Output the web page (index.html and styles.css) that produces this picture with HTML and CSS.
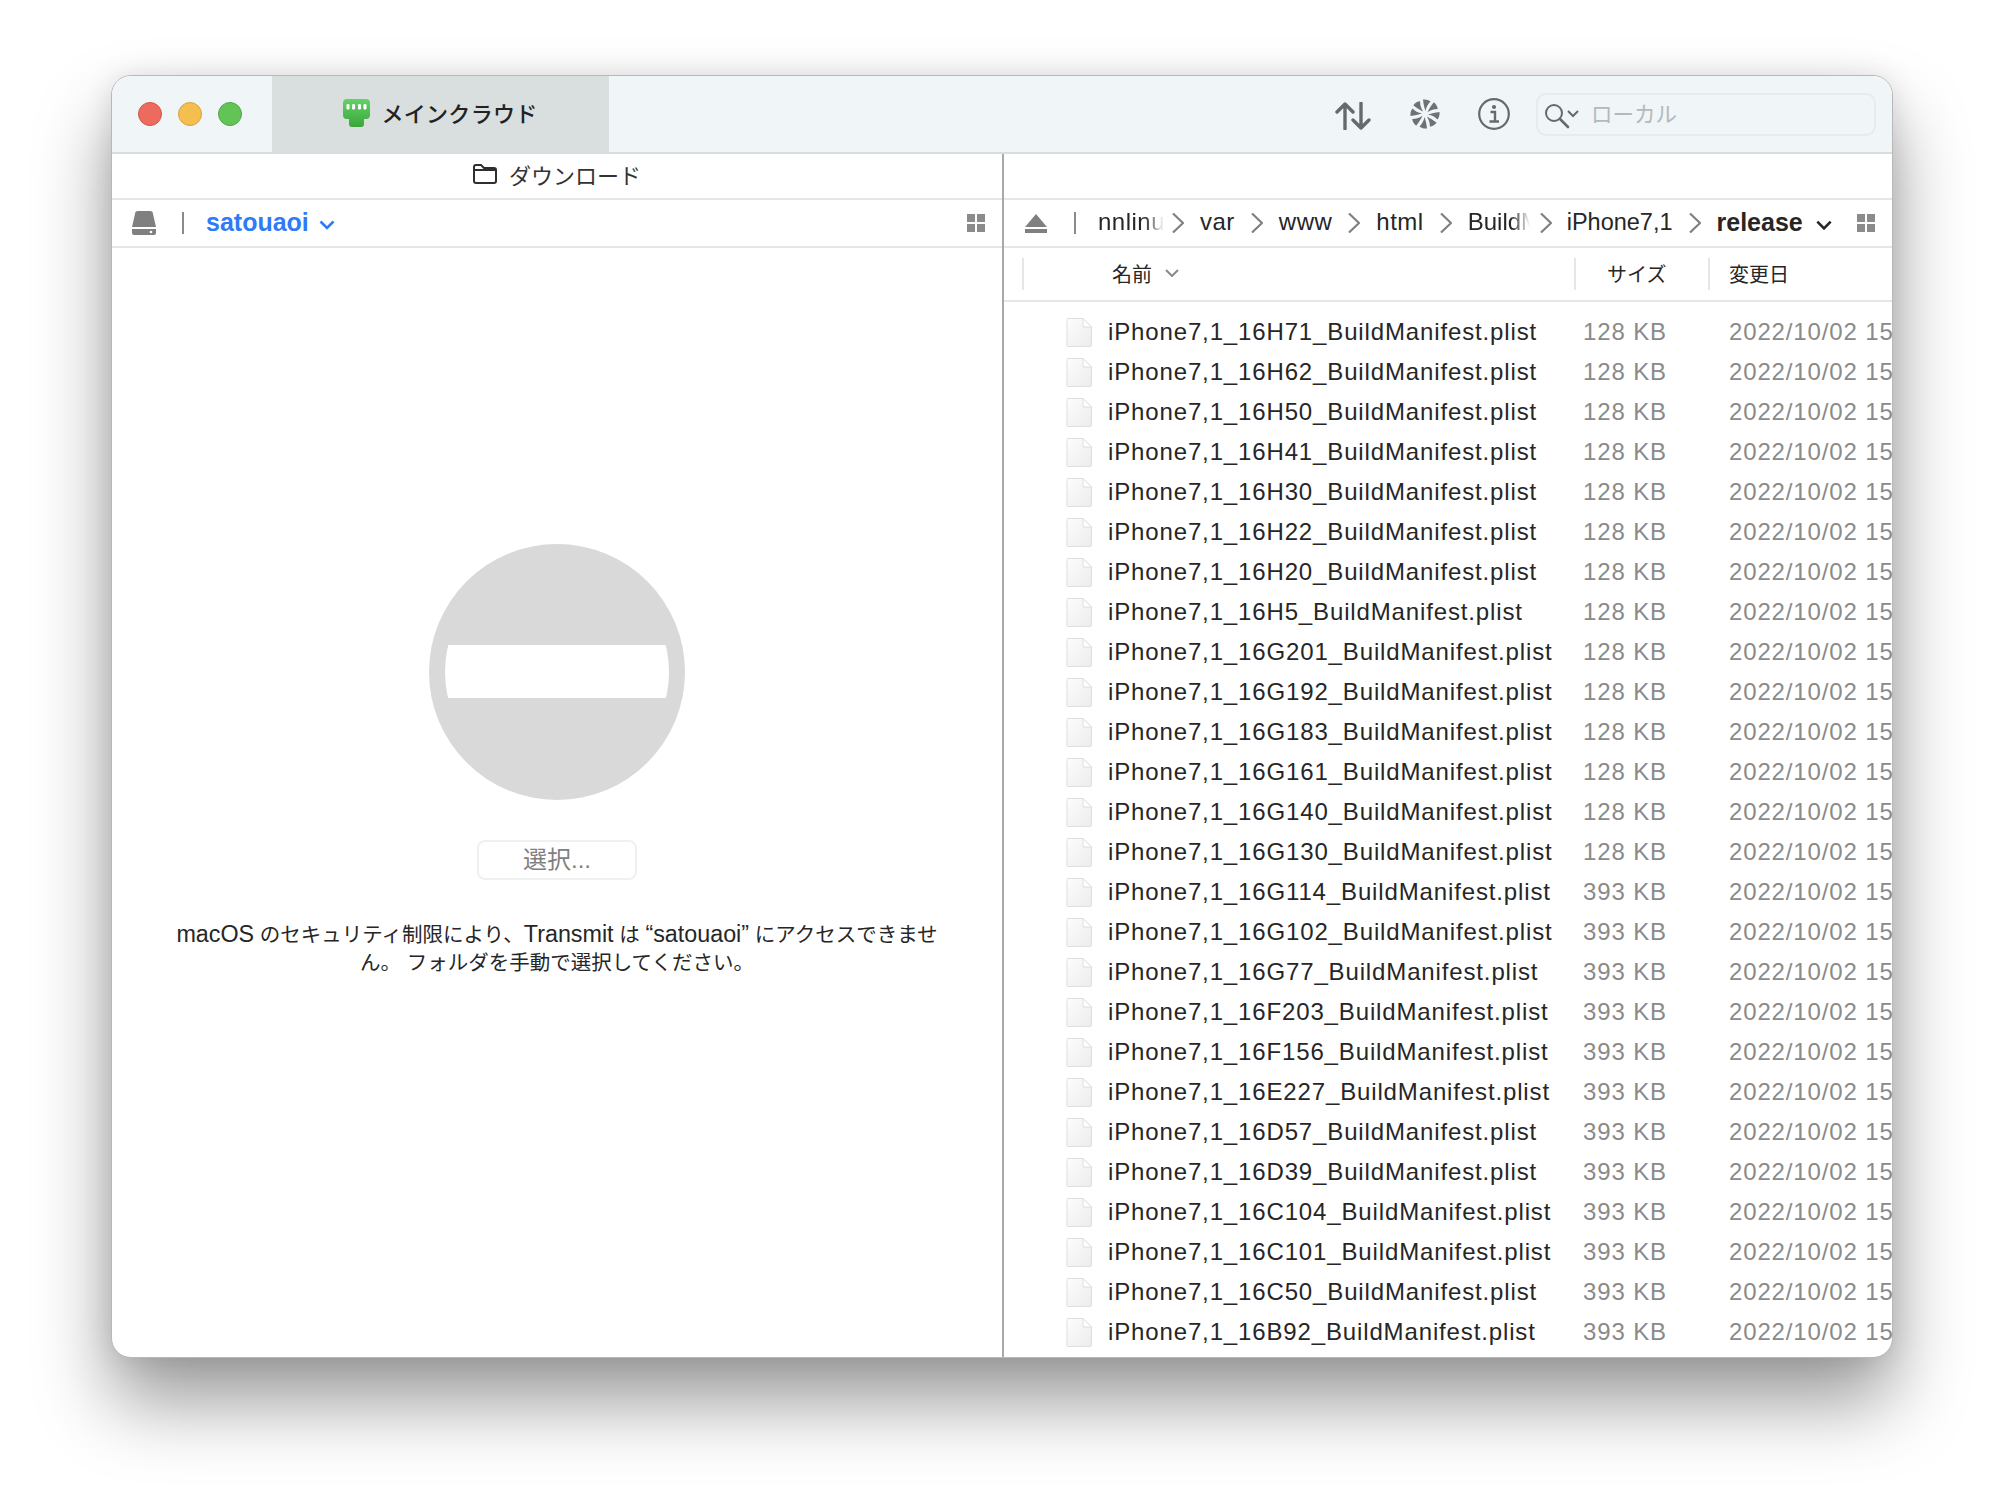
FILE: index.html
```html
<!DOCTYPE html>
<html lang="ja">
<head>
    <meta charset="UTF-8">
    <title>Transmit</title>
    <link rel="stylesheet" href="styles.css">
</head>
<body>
    <svg class="sprites" width="0" height="0">
        <defs>
            <linearGradient id="doc-fill" x1="0" y1="0" x2="1" y2="1">
                <stop offset="0" stop-color="#fdfdfd"/>
                <stop offset="1" stop-color="#ececec"/>
            </linearGradient>
            <linearGradient id="plug-fill" x1="0" y1="0" x2="0" y2="1">
                <stop offset="0" stop-color="#62d365"/>
                <stop offset="1" stop-color="#3aa63a"/>
            </linearGradient>
            <symbol id="doc" viewBox="0 0 26 29">
                <path d="M1 1.500a1 1 0 0 1 1-1H17l8.500 8.500V27a1.500 1.500 0 0 1-1.500 1.500H2a1 1 0 0 1-1-1z" fill="url(#doc-fill)" stroke="#dedede"/>
                <path d="M17 .5V9h8.500z" fill="#fff" stroke="#dedede"/>
            </symbol>
            <symbol id="grid" viewBox="0 0 18 18">
                <path d="M0 0h8v8H0zM10 0h8v8h-8zM0 10h8v8H0zM10 10h8v8h-8z" fill="#8b8b8b"/>
            </symbol>
            <symbol id="crumb" viewBox="0 0 12 20">
                <path d="M1 .5 11 10 1 19.500" fill="none" stroke="#808080" stroke-width="2.200"/>
            </symbol>
        </defs>
    </svg>

    <div class="window">
        <!-- Title bar -->
        <header class="titlebar">
            <div class="lights">
                <span class="light red"></span>
                <span class="light yellow"></span>
                <span class="light green"></span>
            </div>
            <div class="tab">
                <svg class="plug" viewBox="0 0 27 28">
                    <path d="M4 0h19a4 4 0 0 1 4 4v12a4 4 0 0 1-4 4h-2v5a3 3 0 0 1-3 3H9a3 3 0 0 1-3-3v-5H4a4 4 0 0 1-4-4V4a4 4 0 0 1 4-4z" fill="url(#plug-fill)"/>
                    <g fill="#fff">
                        <rect x="3.500" y="5" width="3" height="5.500" rx="1.200"/>
                        <rect x="9" y="5" width="3" height="5.500" rx="1.200"/>
                        <rect x="15" y="5" width="3" height="5.500" rx="1.200"/>
                        <rect x="20.500" y="5" width="3" height="5.500" rx="1.200"/>
                    </g>
                </svg>
                <span class="tab-name">メインクラウド</span>
            </div>
            <div class="tools">
                <svg class="tool-arrows" viewBox="0 0 36 28">
                    <path d="M10 27V2M2 10l8-8 8 8M26 1v25M18 18l8 8 8-8" fill="none" stroke="#636b6e" stroke-width="3.400" stroke-linecap="round" stroke-linejoin="round"/>
                </svg>
                <svg class="tool-pin" viewBox="-15 -15 30 30">
                    <g fill="#6b7376">
                        <path id="blade" d="M.5-3C-.8-7-1.500-10-2-14.500 1-14.800 3.800-14 5.500-12.500 3-10 1.200-7 .5-3z"/>
                        <use href="#blade" transform="rotate(45)"/>
                        <use href="#blade" transform="rotate(90)"/>
                        <use href="#blade" transform="rotate(135)"/>
                        <use href="#blade" transform="rotate(180)"/>
                        <use href="#blade" transform="rotate(225)"/>
                        <use href="#blade" transform="rotate(270)"/>
                        <use href="#blade" transform="rotate(315)"/>
                    </g>
                </svg>
                <svg class="tool-info" viewBox="0 0 32 32">
                    <circle cx="16" cy="16" r="14.800" fill="none" stroke="#636b6e" stroke-width="2.200"/>
                    <circle cx="16" cy="9" r="2.100" fill="#636b6e"/>
                    <path d="M12.500 14h4.500v9M11.500 23.500h9.500" fill="none" stroke="#636b6e" stroke-width="2.400"/>
                </svg>
                <div class="search">
                    <svg class="search-glass" viewBox="0 0 36 26">
                        <circle cx="10" cy="10" r="8" fill="none" stroke="#636b6e" stroke-width="2"/>
                        <path d="M16 16l8 8" stroke="#636b6e" stroke-width="2.600" stroke-linecap="round"/>
                        <path d="M24 8l5 5 5-5" fill="none" stroke="#636b6e" stroke-width="2"/>
                    </svg>
                    <span class="search-text">ローカル</span>
                </div>
            </div>
        </header>

        <div class="panes">
            <!-- Local pane -->
            <section class="pane pane-left">
                <div class="pane-title">
                    <svg class="folder" viewBox="0 0 24 20">
                        <path d="M1 4V3a2 2 0 0 1 2-2h5l3 3h10a2 2 0 0 1 2 2v11a2 2 0 0 1-2 2H3a2 2 0 0 1-2-2zM1 6h22" fill="none" stroke="#2f2f2f" stroke-width="2"/>
                    </svg>
                    <span>ダウンロード</span>
                </div>
                <div class="pathbar">
                    <svg class="disk" viewBox="0 0 24 24">
                        <path d="M3 3a3 3 0 0 1 3-3h12a3 3 0 0 1 3 3l3 13H0z" fill="#808080"/>
                        <path d="M0 18h24v4a2 2 0 0 1-2 2H2a2 2 0 0 1-2-2z" fill="#808080"/>
                        <circle cx="19" cy="21" r="1.300" fill="#fff"/>
                    </svg>
                    <span class="sep"></span>
                    <span class="place">satouaoi</span>
                    <svg class="place-chev" viewBox="0 0 16 10">
                        <path d="M1.500 1.500 8 8l6.500-6.500" fill="none" stroke="#2f7af7" stroke-width="2.600"/>
                    </svg>
                    <svg class="grid-btn"><use href="#grid"/></svg>
                </div>
                <div class="denied">
                    <svg class="no-entry" viewBox="0 0 256 256">
                        <defs>
                            <clipPath id="inner"><circle cx="128" cy="128" r="112"/></clipPath>
                        </defs>
                        <circle cx="128" cy="128" r="128" fill="#d9d9d9"/>
                        <rect x="0" y="101" width="256" height="53" fill="#fff" clip-path="url(#inner)"/>
                    </svg>
                    <div class="pick-btn">選択...</div>
                    <p class="denied-text"><span class="lat">macOS</span> のセキュリティ制限により、<span class="lat">Transmit</span> は <span class="lat">“satouaoi”</span> にアクセスできませ<br>ん。 フォルダを手動で選択してください。</p>
                </div>
            </section>

            <!-- Remote pane -->
            <section class="pane pane-right">
                <div class="pane-title"></div>
                <div class="pathbar pathbar-remote">
                    <svg class="eject" viewBox="0 0 22 19">
                        <path d="M11 0l11 13H0zM0 15h22v4H0z" fill="#808080"/>
                    </svg>
                    <span class="sep"></span>
                    <span class="crumb cut crumb-nn">nnlinux</span>
                    <svg class="chev chev-nn"><use href="#crumb"/></svg>
                    <span class="crumb">var</span>
                    <svg class="chev"><use href="#crumb"/></svg>
                    <span class="crumb">www</span>
                    <svg class="chev"><use href="#crumb"/></svg>
                    <span class="crumb">html</span>
                    <svg class="chev"><use href="#crumb"/></svg>
                    <span class="crumb cut crumb-build">BuildManifest</span>
                    <svg class="chev chev-build"><use href="#crumb"/></svg>
                    <span class="crumb crumb-phone">iPhone7,1</span>
                    <svg class="chev"><use href="#crumb"/></svg>
                    <span class="crumb current">release</span>
                    <svg class="current-chev" viewBox="0 0 14 9">
                        <path d="M1 1.500 7 7.500l6-6" fill="none" stroke="#262626" stroke-width="2.400"/>
                    </svg>
                    <svg class="grid-btn"><use href="#grid"/></svg>
                </div>
                <div class="columns">
                    <div class="col col-name">
                        名前
                        <svg class="sort-chev" viewBox="0 0 14 8">
                            <path d="M1 1l6 6 6-6" fill="none" stroke="#8a8a8a" stroke-width="2"/>
                        </svg>
                    </div>
                    <div class="col col-size">サイズ</div>
                    <div class="col col-date">変更日</div>
                </div>
                <ul class="files">
                    <li><svg class="doc"><use href="#doc"/></svg><span class="f-name">iPhone7,1_16H71_BuildManifest.plist</span><span class="f-size">128 KB</span><span class="f-date">2022/10/02 15</span></li>
                    <li><svg class="doc"><use href="#doc"/></svg><span class="f-name">iPhone7,1_16H62_BuildManifest.plist</span><span class="f-size">128 KB</span><span class="f-date">2022/10/02 15</span></li>
                    <li><svg class="doc"><use href="#doc"/></svg><span class="f-name">iPhone7,1_16H50_BuildManifest.plist</span><span class="f-size">128 KB</span><span class="f-date">2022/10/02 15</span></li>
                    <li><svg class="doc"><use href="#doc"/></svg><span class="f-name">iPhone7,1_16H41_BuildManifest.plist</span><span class="f-size">128 KB</span><span class="f-date">2022/10/02 15</span></li>
                    <li><svg class="doc"><use href="#doc"/></svg><span class="f-name">iPhone7,1_16H30_BuildManifest.plist</span><span class="f-size">128 KB</span><span class="f-date">2022/10/02 15</span></li>
                    <li><svg class="doc"><use href="#doc"/></svg><span class="f-name">iPhone7,1_16H22_BuildManifest.plist</span><span class="f-size">128 KB</span><span class="f-date">2022/10/02 15</span></li>
                    <li><svg class="doc"><use href="#doc"/></svg><span class="f-name">iPhone7,1_16H20_BuildManifest.plist</span><span class="f-size">128 KB</span><span class="f-date">2022/10/02 15</span></li>
                    <li><svg class="doc"><use href="#doc"/></svg><span class="f-name">iPhone7,1_16H5_BuildManifest.plist</span><span class="f-size">128 KB</span><span class="f-date">2022/10/02 15</span></li>
                    <li><svg class="doc"><use href="#doc"/></svg><span class="f-name">iPhone7,1_16G201_BuildManifest.plist</span><span class="f-size">128 KB</span><span class="f-date">2022/10/02 15</span></li>
                    <li><svg class="doc"><use href="#doc"/></svg><span class="f-name">iPhone7,1_16G192_BuildManifest.plist</span><span class="f-size">128 KB</span><span class="f-date">2022/10/02 15</span></li>
                    <li><svg class="doc"><use href="#doc"/></svg><span class="f-name">iPhone7,1_16G183_BuildManifest.plist</span><span class="f-size">128 KB</span><span class="f-date">2022/10/02 15</span></li>
                    <li><svg class="doc"><use href="#doc"/></svg><span class="f-name">iPhone7,1_16G161_BuildManifest.plist</span><span class="f-size">128 KB</span><span class="f-date">2022/10/02 15</span></li>
                    <li><svg class="doc"><use href="#doc"/></svg><span class="f-name">iPhone7,1_16G140_BuildManifest.plist</span><span class="f-size">128 KB</span><span class="f-date">2022/10/02 15</span></li>
                    <li><svg class="doc"><use href="#doc"/></svg><span class="f-name">iPhone7,1_16G130_BuildManifest.plist</span><span class="f-size">128 KB</span><span class="f-date">2022/10/02 15</span></li>
                    <li><svg class="doc"><use href="#doc"/></svg><span class="f-name">iPhone7,1_16G114_BuildManifest.plist</span><span class="f-size">393 KB</span><span class="f-date">2022/10/02 15</span></li>
                    <li><svg class="doc"><use href="#doc"/></svg><span class="f-name">iPhone7,1_16G102_BuildManifest.plist</span><span class="f-size">393 KB</span><span class="f-date">2022/10/02 15</span></li>
                    <li><svg class="doc"><use href="#doc"/></svg><span class="f-name">iPhone7,1_16G77_BuildManifest.plist</span><span class="f-size">393 KB</span><span class="f-date">2022/10/02 15</span></li>
                    <li><svg class="doc"><use href="#doc"/></svg><span class="f-name">iPhone7,1_16F203_BuildManifest.plist</span><span class="f-size">393 KB</span><span class="f-date">2022/10/02 15</span></li>
                    <li><svg class="doc"><use href="#doc"/></svg><span class="f-name">iPhone7,1_16F156_BuildManifest.plist</span><span class="f-size">393 KB</span><span class="f-date">2022/10/02 15</span></li>
                    <li><svg class="doc"><use href="#doc"/></svg><span class="f-name">iPhone7,1_16E227_BuildManifest.plist</span><span class="f-size">393 KB</span><span class="f-date">2022/10/02 15</span></li>
                    <li><svg class="doc"><use href="#doc"/></svg><span class="f-name">iPhone7,1_16D57_BuildManifest.plist</span><span class="f-size">393 KB</span><span class="f-date">2022/10/02 15</span></li>
                    <li><svg class="doc"><use href="#doc"/></svg><span class="f-name">iPhone7,1_16D39_BuildManifest.plist</span><span class="f-size">393 KB</span><span class="f-date">2022/10/02 15</span></li>
                    <li><svg class="doc"><use href="#doc"/></svg><span class="f-name">iPhone7,1_16C104_BuildManifest.plist</span><span class="f-size">393 KB</span><span class="f-date">2022/10/02 15</span></li>
                    <li><svg class="doc"><use href="#doc"/></svg><span class="f-name">iPhone7,1_16C101_BuildManifest.plist</span><span class="f-size">393 KB</span><span class="f-date">2022/10/02 15</span></li>
                    <li><svg class="doc"><use href="#doc"/></svg><span class="f-name">iPhone7,1_16C50_BuildManifest.plist</span><span class="f-size">393 KB</span><span class="f-date">2022/10/02 15</span></li>
                    <li><svg class="doc"><use href="#doc"/></svg><span class="f-name">iPhone7,1_16B92_BuildManifest.plist</span><span class="f-size">393 KB</span><span class="f-date">2022/10/02 15</span></li>
                </ul>
            </section>
        </div>
    </div>
</body>
</html>
```

FILE: styles.css
```css
* {
    box-sizing: border-box;
}

html, body {
    margin: 0;
    height: 100%;
}

body {
    background: #fff;
    padding: 75px 0 0 111px;
    font-family: "Liberation Sans", "Noto Sans CJK JP", sans-serif;
    color: #262626;
    overflow: hidden;
}

.sprites {
    position: absolute;
}

.window {
    width: 1782px;
    height: 1283px;
    border: 1px solid #b8b8b8;
    border-radius: 20px;
    background: #fff;
    overflow: hidden;
    display: flex;
    flex-direction: column;
    box-shadow: 0 44px 76px rgba(0, 0, 0, 0.4), 0 0 28px rgba(0, 0, 0, 0.1);
}

/* Title bar */
.titlebar {
    height: 78px;
    flex: none;
    display: flex;
    background: #f0f5f8;
    border-bottom: 2px solid #d9dcde;
}

.lights {
    width: 160px;
    padding-left: 26px;
    display: flex;
    align-items: center;
    gap: 16px;
}

.light {
    width: 24px;
    height: 24px;
    border-radius: 50%;
    border: 1px solid;
}

.red { background: #ed6a5f; border-color: #d3564b; }
.yellow { background: #f5bf4f; border-color: #d9a33d; }
.green { background: #61c454; border-color: #51a847; }

.tab {
    width: 337px;
    background: #d9dedf;
    display: flex;
    align-items: center;
    justify-content: center;
    gap: 11px;
}

.plug {
    width: 27px;
    height: 28px;
    margin-bottom: 2px;
}

.tab-name {
    font-size: 22px;
    font-weight: 500;
    letter-spacing: 0.3px;
    color: #222;
    margin-bottom: 4px;
}

.tools {
    margin-left: auto;
    padding-right: 16px;
    display: flex;
    align-items: center;
}

.tool-arrows { width: 36px; height: 28px; margin-top: 3px; }
.tool-pin { width: 30px; height: 30px; margin-left: 39px; }
.tool-info { width: 32px; height: 32px; margin-left: 38px; }

.search {
    width: 340px;
    height: 43px;
    margin-left: 26px;
    padding-left: 6px;
    border: 2px solid #e6ebee;
    border-radius: 10px;
    display: flex;
    align-items: center;
    gap: 11px;
}

.search-glass { width: 36px; height: 26px; margin-top: 4px; }

.search-text {
    font-size: 21.500px;
    color: #b4b9bc;
    margin-bottom: 4px;
}

/* Panes */
.panes {
    flex: 1;
    min-height: 0;
    display: flex;
}

.pane {
    display: flex;
    flex-direction: column;
    min-width: 0;
}

.pane-left {
    width: 892px;
    flex: none;
    border-right: 2px solid #a9a9a9;
}

.pane-right {
    flex: 1;
    overflow: hidden;
}

.pane-title {
    height: 46px;
    flex: none;
    padding-bottom: 4px;
    border-bottom: 2px solid #e6e6e6;
    display: flex;
    align-items: center;
    justify-content: center;
    gap: 12px;
    font-size: 22px;
    color: #333;
}

.folder {
    width: 24px;
    height: 20px;
}

.pathbar {
    height: 48px;
    flex: none;
    border-bottom: 2px solid #e6e6e6;
    padding: 0 17px 0 20px;
    display: flex;
    align-items: center;
}

.disk {
    width: 24px;
    height: 24px;
}

.sep {
    width: 2px;
    height: 22px;
    margin: 0 22px 0 26px;
    background: #8a8a8a;
}

.place {
    font-size: 25px;
    font-weight: bold;
    color: #2f7af7;
    margin-bottom: 2px;
}

.place-chev {
    width: 16px;
    height: 10px;
    margin: 3px 0 0 10px;
}

.grid-btn {
    width: 18px;
    height: 18px;
    margin-left: auto;
}

.pathbar-remote {
    padding-left: 21px;
}

.pathbar-remote .sep {
    margin-left: 27px;
}

.eject {
    width: 22px;
    height: 19px;
}

.crumb {
    font-size: 24px;
    letter-spacing: 0.5px;
    white-space: nowrap;
    margin-bottom: 2px;
}

.cut {
    overflow: hidden;
    -webkit-mask-image: linear-gradient(to right, #000 70%, transparent);
    mask-image: linear-gradient(to right, #000 70%, transparent);
}

.crumb-nn { width: 66px; }

.crumb-build {
    width: 62px;
    letter-spacing: 0;
}

.crumb-phone {
    font-size: 23.500px;
    letter-spacing: 0;
}

.chev {
    width: 12px;
    height: 20px;
    margin: 0 16px;
}

.chev-nn {
    margin-left: 8px;
}

.chev-build {
    margin: 0 15px 0 10px;
}

.current {
    font-size: 25px;
    font-weight: bold;
    letter-spacing: 0;
}

.current-chev {
    width: 16px;
    height: 10px;
    margin: 4px 0 0 13px;
}

.columns {
    height: 54px;
    flex: none;
    border-bottom: 2px solid #e6e6e6;
    display: grid;
    grid-template-columns: 552px 134px 1fr;
    padding: 10px 0 10px 18px;
    font-size: 20px;
}

.col {
    border-left: 2px solid #e6e6e6;
    padding-bottom: 2px;
    display: flex;
    align-items: center;
}

.col-name { padding-left: 88px; gap: 13px; }
.col-size { padding-left: 31px; }
.col-date { padding-left: 19px; }

.sort-chev {
    width: 14px;
    height: 8px;
}

.files {
    list-style: none;
    margin: 0;
    padding: 10px 0 0;
    flex: 1;
    min-height: 0;
    overflow: hidden;
}

.files li {
    height: 40px;
    padding-left: 62px;
    display: flex;
    align-items: center;
    white-space: nowrap;
}

.doc {
    width: 26px;
    height: 29px;
    flex: none;
}

.f-name {
    width: 475px;
    margin-left: 16px;
    font-size: 24px;
    letter-spacing: 0.86px;
    flex: none;
}

.f-size, .f-date {
    font-size: 24px;
    letter-spacing: 0.86px;
    color: #8a8a8a;
    flex: none;
}

.f-size {
    width: 82px;
    text-align: right;
}

.f-date {
    margin-left: 64px;
}

/* Access denied panel */
.denied {
    flex: 1;
    display: flex;
    flex-direction: column;
    align-items: center;
    padding-top: 296px;
}

.no-entry {
    width: 256px;
    height: 256px;
}

.pick-btn {
    width: 160px;
    height: 40px;
    margin-top: 40px;
    border: 2px solid #f0f0f0;
    border-radius: 8px;
    text-align: center;
    line-height: 36px;
    font-size: 24px;
    color: #808080;
}

.denied-text {
    margin: 40px 0 0;
    font-size: 20.500px;
    line-height: 28px;
    text-align: center;
    white-space: nowrap;
    color: #262626;
}

.lat {
    font-size: 23.300px;
}
```
